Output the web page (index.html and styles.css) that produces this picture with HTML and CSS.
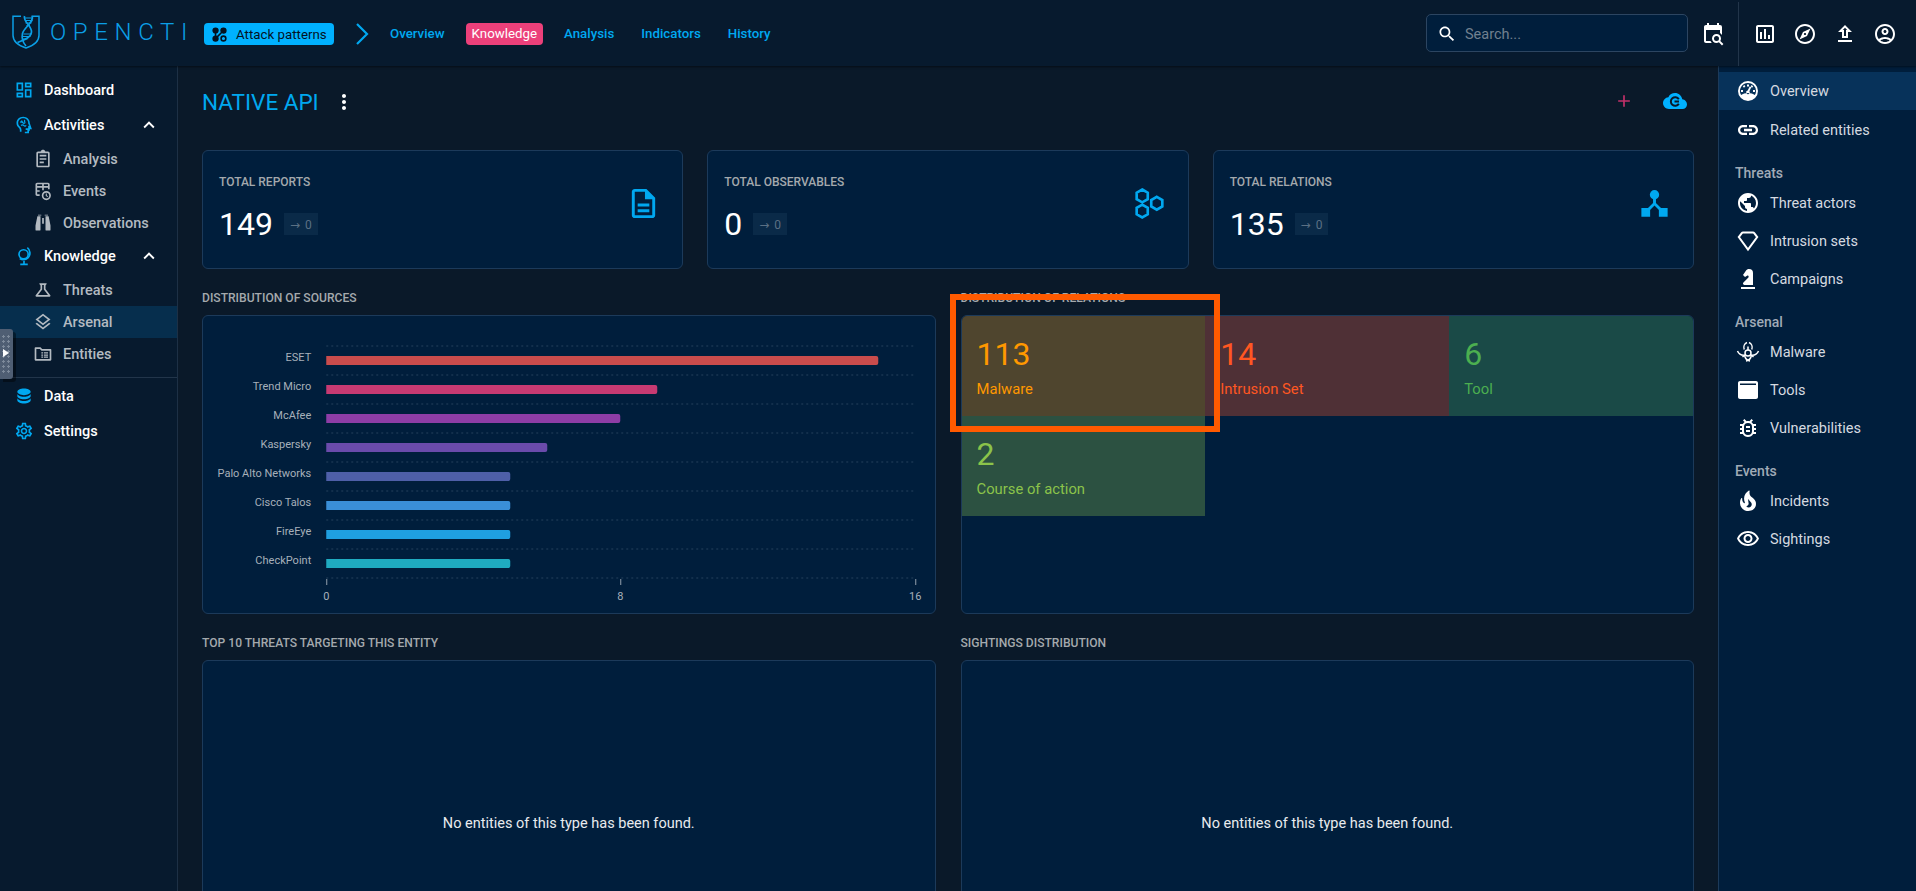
FILE: index.html
```html
<!DOCTYPE html>
<html lang="en">
<head>
<meta charset="UTF-8">
<title>Native API - Knowledge | OpenCTI</title>
<link rel="stylesheet" href="styles.css">
</head>
<body>

<header class="topbar">
  <div class="logo">
    <svg class="logo-mark" viewBox="0 0 28 34" fill="none" stroke="#0b9fe6">
      <path d="M9 1.200H1v19c0 7 6 10.500 13 12.800 7-2.300 13-5.800 13-12.800v-19h-6" stroke-width="1.500"/>
      <path d="M20 0.500C23 7 12 12 10.500 18.500C9.500 23 10.500 27 14 31" stroke-width="1.700"/>
      <path d="M12.500 1C11 7 20 11 19.500 17C19 23 11 25 5.500 27.500" stroke-width="1.700"/>
      <path d="M13 3h7M13 5.500h7.500M13.500 8h6M14.500 10.500h3.500M11.500 19h8M11 21.500h7.500M10.500 24h5" stroke-width="1.100"/>
    </svg>
    <span class="logo-text">OPENCTI</span>
  </div>
  <span class="type-chip">
    <svg viewBox="0 0 24 24"><path d="M7,3A4,4 0 0,1 11,7C11,8.860 9.730,10.430 8,10.870V13.130C8.370,13.220 8.720,13.370 9.040,13.560L13.560,9.040C13.200,8.440 13,7.750 13,7A4,4 0 0,1 17,3A4,4 0 0,1 21,7A4,4 0 0,1 17,11C16.260,11 15.570,10.800 15,10.450L10.450,15C10.800,15.570 11,16.260 11,17A4,4 0 0,1 7,21A4,4 0 0,1 3,17C3,15.140 4.270,13.570 6,13.130V10.870C4.270,10.430 3,8.860 3,7A4,4 0 0,1 7,3M17,13A4,4 0 0,1 21,17A4,4 0 0,1 17,21A4,4 0 0,1 13,17A4,4 0 0,1 17,13M17,15A2,2 0 0,0 15,17A2,2 0 0,0 17,19A2,2 0 0,0 19,17A2,2 0 0,0 17,15Z"/></svg>
    Attack patterns
  </span>
  <svg class="crumb" viewBox="0 0 14 24" fill="none"><path d="M2 2l10 10L2 22" stroke="#00a8f0" stroke-width="2.200"/></svg>
  <nav class="tabs">
    <a class="tab">Overview</a>
    <a class="tab tab-active">Knowledge</a>
    <a class="tab">Analysis</a>
    <a class="tab">Indicators</a>
    <a class="tab">History</a>
  </nav>
  <div class="topbar-right">
    <div class="search">
      <svg viewBox="0 0 24 24"><path d="M15.500 14h-.790l-.280-.270C15.410 12.590 16 11.110 16 9.500 16 5.910 13.090 3 9.500 3S3 5.910 3 9.500 5.910 16 9.500 16c1.610 0 3.090-.590 4.230-1.570l.270.280v.790l5 4.990L20.490 19l-4.990-5zm-6 0C7.010 14 5 11.990 5 9.500S7.010 5 9.500 5 14 7.010 14 9.500 11.990 14 9.500 14z"/></svg>
      <span>Search...</span>
    </div>
    <svg class="top-icon cal-icon" viewBox="0 0 24 24"><path d="M15.500,12C18,12 20,14 20,16.500C20,17.380 19.750,18.210 19.310,18.900L22.390,22L21,23.390L17.880,20.320C17.190,20.750 16.370,21 15.500,21C13,21 11,19 11,16.500C11,14 13,12 15.500,12M15.500,14A2.500,2.500 0 0,0 13,16.500A2.500,2.500 0 0,0 15.500,19A2.500,2.500 0 0,0 18,16.500A2.500,2.500 0 0,0 15.500,14M19,8H5V19H9.500C9.810,19.750 10.260,20.420 10.810,21H5C3.890,21 3,20.100 3,19V5C3,3.890 3.890,3 5,3H6V1H8V3H16V1H18V3H19A2,2 0 0,1 21,5V13.030C20.500,12.220 19.800,11.540 19,11V8Z"/></svg>
    <div class="top-actions">
      <svg class="top-icon" viewBox="0 0 24 24"><path d="M9 17H7v-7h2v7zm4 0h-2V7h2v10zm4 0h-2v-4h2v4zm2 2H5V5h14v14zm0-16H5c-1.100 0-2 .900-2 2v14c0 1.100.900 2 2 2h14c1.100 0 2-.900 2-2V5c0-1.100-.900-2-2-2z"/></svg>
      <svg class="top-icon" viewBox="0 0 24 24"><path d="M12 2C6.480 2 2 6.480 2 12s4.480 10 10 10 10-4.480 10-10S17.520 2 12 2zm0 18c-4.410 0-8-3.590-8-8s3.590-8 8-8 8 3.590 8 8-3.590 8-8 8zm-5.500-2.500l7.510-3.490L17.500 6.500 9.990 9.990 6.500 17.500zm5.500-6.600c.610 0 1.100.490 1.100 1.100s-.490 1.100-1.100 1.100-1.100-.490-1.100-1.100.490-1.100 1.100-1.100z"/></svg>
      <svg class="top-icon" viewBox="0 0 24 24"><path d="M9 16h6v-6h4l-7-7-7 7h4v6zm3-10.170L14.170 8H13v6h-2V8H9.830L12 5.830zM5 18h14v2H5z"/></svg>
      <svg class="top-icon" viewBox="0 0 24 24"><path d="M12 2C6.480 2 2 6.480 2 12s4.480 10 10 10 10-4.480 10-10S17.520 2 12 2zM7.350 18.500C8.660 17.560 10.260 17 12 17s3.340.560 4.650 1.500c-1.310.940-2.910 1.500-4.650 1.500s-3.340-.560-4.650-1.500zm10.790-1.380C16.450 15.800 14.320 15 12 15s-4.450.800-6.140 2.120C4.700 15.730 4 13.950 4 12c0-4.420 3.580-8 8-8s8 3.580 8 8c0 1.950-.700 3.730-1.860 5.120zM12 6c-1.930 0-3.500 1.570-3.500 3.500S10.070 13 12 13s3.500-1.570 3.500-3.500S13.930 6 12 6zm0 5c-.830 0-1.500-.670-1.500-1.500S11.170 8 12 8s1.500.670 1.500 1.500S12.830 11 12 11z"/></svg>
    </div>
  </div>
</header>

<div class="layout">
  <aside class="sidebar">
    <div class="nav-group">
      <a class="nav-item">
        <svg viewBox="0 0 24 24"><path d="M19 5v2h-4V5h4M9 5v6H5V5h4m10 8v6h-4v-6h4M9 17v2H5v-2h4M21 3h-8v6h8V3zM11 3H3v10h8V3zm10 8h-8v10h8V11zm-10 4H3v6h8v-6z"/></svg>
        Dashboard
      </a>
      <a class="nav-item">
        <svg viewBox="0 0 24 24"><path d="M11 2C6.500 2 3 5.300 3 9.500c0 2.300 1 4.400 2.700 5.800.800.700 1.300 1.700 1.300 2.700V20h2v-2c0-1.600-.800-3.100-2-4.200-1.300-1.100-2-2.700-2-4.300C5 6.400 7.700 4 11 4s6 2.400 6 5.500v1.100l1.500 2.400H17v3h-3v2h2v2h-3v2h5v-2.500c.800-.300 1-1 1-1.500v-1h2.500L19 10V9.500C19 5.300 15.500 2 11 2z"/><path fill="none" stroke="#00a8f0" stroke-width="1.500" d="M7.500 9c1-1.500 2.500-1 3 0s2 1.500 3 0M9 6.500c1 .800 1 2 .300 3M13 6c-.800 1-.500 2.200.300 3M8.500 12.500c1-.800 2.500-1 3.500.300s2 .500 2.500-.500"/></svg>
        Activities
        <svg class="nav-caret" viewBox="0 0 24 24"><path d="M12 8l-6 6 1.410 1.410L12 10.830l4.590 4.580L18 14z"/></svg>
      </a>
      <a class="nav-sub">
        <svg viewBox="0 0 24 24"><path d="M18 3h-3.180C14.400 1.840 13.300 1 12 1c-1.300 0-2.400.840-2.820 2H6c-1.100 0-2 .900-2 2v15c0 1.100.900 2 2 2h12c1.100 0 2-.900 2-2V5c0-1.100-.900-2-2-2zm0 17H6V5h12v15zM8 15h5v2H8zm0-4h8v2H8zm0-4h8v2H8z"/></svg>
        Analysis
      </a>
      <a class="nav-sub">
        <svg viewBox="0 0 24 24"><path d="M5 2h13c1.100 0 2 .900 2 2v6h-2V8h-5v3h-2V8H5v3h3v2H5v3h3v2H5c-1.100 0-2-.900-2-2V4c0-1.100.900-2 2-2zm0 2v2h6V4H5zm8 0v2h5V4h-5zm3 8a5.500 5.500 0 1 0 0 11 5.500 5.500 0 0 0 0-11zm0 2a3.500 3.500 0 1 1 0 7 3.500 3.500 0 0 1 0-7zm-.700 1v3l2.300 1.300.600-1-1.600-.900V15z"/></svg>
        Events
      </a>
      <a class="nav-sub">
        <svg viewBox="0 0 24 24"><path d="M11,6H13V13H11V6M9,20A1,1 0 0,1 8,21H4A1,1 0 0,1 3,20V15L5.250,4H9V20M15,20V4H18.750L21,15V20A1,1 0 0,1 20,21H16A1,1 0 0,1 15,20M14,2H18V3H14V2M10,2V3H6V2H10Z"/></svg>
        Observations
      </a>
      <a class="nav-item">
        <svg viewBox="0 0 24 24" stroke="#00a8f0" stroke-width="2"><circle fill="none" cx="11.500" cy="10" r="5.500"/><path fill="none" d="M16 2c3.500 2.800 4.300 8.500 1 12-2.600 2.800-7 3.300-10 1M12 18v3M7.500 22h9"/></svg>
        Knowledge
        <svg class="nav-caret" viewBox="0 0 24 24"><path d="M12 8l-6 6 1.410 1.410L12 10.830l4.590 4.580L18 14z"/></svg>
      </a>
      <a class="nav-sub">
        <svg viewBox="0 0 24 24"><path d="M13,11.330L18,18H6l5-6.670V6h2M15.960,4H8.040C7.620,4,7.390,4.480,7.650,4.810L9,6.500v4.170L3.200,18.400C2.710,19.060,3.180,20,4,20h16c0.820,0,1.290-0.940,0.800-1.600L15,10.670V6.500l1.350-1.690C16.610,4.480,16.380,4,15.960,4L15.960,4z"/></svg>
        Threats
      </a>
      <a class="nav-sub nav-sub-active">
        <svg viewBox="0 0 24 24"><path d="M11.990 18.540l-7.370-5.730L3 14.070l9 7 9-7-1.630-1.270zM12 16l7.360-5.730L21 9l-9-7-9 7 1.630 1.270L12 16zm0-11.470L17.740 9 12 13.470 6.260 9 12 4.530z"/></svg>
        Arsenal
      </a>
      <a class="nav-sub">
        <svg viewBox="0 0 24 24"><path d="M3 4h6l2 2h10c.600 0 1 .400 1 1v12c0 .600-.400 1-1 1H3c-.600 0-1-.400-1-1V5c0-.600.400-1 1-1zm1 2v12h16V8H10.200l-2-2H4zm9 4h5v1.500h-5zm0 2.500h5V14h-5zm0 2.500h5v1.500h-5zm-3-5h2v1.500h-2zm0 2.500h2V14h-2zm0 2.500h2v1.500h-2z"/></svg>
        Entities
      </a>
    </div>
    <div class="nav-group nav-group-bottom">
      <a class="nav-item">
        <svg viewBox="0 0 24 24"><path d="M12,3C7.580,3 4,4.790 4,7C4,9.210 7.580,11 12,11C16.420,11 20,9.210 20,7C20,4.790 16.420,3 12,3M4,9V12C4,14.210 7.580,16 12,16C16.420,16 20,14.210 20,12V9C20,11.210 16.420,13 12,13C7.580,13 4,11.210 4,9M4,14V17C4,19.210 7.580,21 12,21C16.420,21 20,19.210 20,17V14C20,16.210 16.420,18 12,18C7.580,18 4,16.210 4,14Z"/></svg>
        Data
      </a>
      <a class="nav-item">
        <svg viewBox="0 0 24 24"><path d="M19.430 12.980c.040-.320.070-.640.070-.980 0-.340-.030-.660-.070-.980l2.110-1.650c.190-.150.240-.420.120-.640l-2-3.460c-.090-.160-.260-.250-.440-.250-.060 0-.120.010-.170.030l-2.490 1c-.520-.400-1.080-.730-1.690-.980l-.380-2.650C14.460 2.180 14.250 2 14 2h-4c-.250 0-.460.180-.490.420l-.380 2.650c-.610.250-1.170.590-1.690.980l-2.490-1c-.060-.020-.120-.030-.180-.030-.170 0-.340.090-.430.250l-2 3.460c-.130.220-.070.490.120.640l2.110 1.650c-.040.320-.070.650-.070.980 0 .330.030.660.070.980l-2.110 1.650c-.190.150-.240.420-.120.640l2 3.460c.090.160.260.250.440.250.060 0 .120-.010.170-.030l2.490-1c.520.400 1.080.730 1.690.980l.380 2.650c.030.240.240.420.490.420h4c.250 0 .460-.180.490-.420l.380-2.650c.610-.250 1.170-.590 1.690-.980l2.490 1c.060.020.120.030.180.030.170 0 .340-.090.430-.250l2-3.460c.120-.220.070-.490-.120-.640l-2.110-1.650zm-1.980-1.710c.040.310.050.520.050.730 0 .210-.020.430-.050.730l-.140 1.130.890.700 1.080.840-.700 1.210-1.270-.510-1.040-.420-.900.680c-.430.320-.840.560-1.250.730l-1.060.430-.160 1.130-.200 1.350h-1.400l-.190-1.350-.160-1.130-1.060-.43c-.430-.180-.830-.410-1.230-.710l-.910-.700-1.060.430-1.270.510-.700-1.210 1.080-.840.890-.700-.140-1.130c-.030-.310-.050-.540-.050-.740s.020-.430.050-.730l.140-1.130-.890-.700-1.080-.840.700-1.210 1.270.510 1.040.42.900-.680c.430-.320.840-.560 1.250-.730l1.060-.43.160-1.130.200-1.350h1.390l.190 1.350.160 1.130 1.060.43c.430.180.830.410 1.230.710l.910.700 1.060-.43 1.270-.510.700 1.210-1.070.850-.890.700.140 1.130zM12 8c-2.210 0-4 1.790-4 4s1.790 4 4 4 4-1.790 4-4-1.790-4-4-4zm0 6c-1.100 0-2-.900-2-2s.900-2 2-2 2 .900 2 2-.900 2-2 2z"/></svg>
        Settings
      </a>
    </div>
    <div class="drag-handle"></div>
  </aside>

  <main class="content">
    <div class="title-row">
      <h1 class="entity-name">NATIVE API</h1>
      <svg class="kebab" viewBox="0 0 24 24"><path d="M12 8c1.100 0 2-.900 2-2s-.900-2-2-2-2 .900-2 2 .900 2 2 2zm0 2c-1.100 0-2 .900-2 2s.900 2 2 2 2-.900 2-2-.900-2-2-2zm0 6c-1.100 0-2 .900-2 2s.900 2 2 2 2-.900 2-2-.900-2-2-2z"/></svg>
      <div class="title-actions">
        <svg class="plus" viewBox="0 0 24 24"><path d="M19 13h-6v6h-2v-6H5v-2h6V5h2v6h6v2z"/></svg>
        <svg class="cloud" viewBox="0 0 24 16"><path d="M19.300 6.200C18.600 2.700 15.600 0 12 0 9.100 0 6.600 1.300 5.400 4.200 2.300 4.500 0 7 0 10.100 0 13.300 2.700 16 6 16h13.500c2.500 0 4.500-2 4.500-4.500 0-2.700-2.100-5-4.700-5.300z"/><path d="M15.800 6.200A4.300 4.300 0 1 0 15.800 10.800M11.500 8.500h4.500" fill="none" stroke="#0a1929" stroke-width="2"/></svg>
      </div>
    </div>

    <div class="stat-row">
      <div class="stat-card">
        <div class="stat-text">
          <div class="stat-label">TOTAL REPORTS</div>
          <div class="stat-line"><span class="stat-value">149</span><span class="delta"><i>&#8594;</i> 0</span></div>
        </div>
        <svg class="stat-icon" viewBox="0 0 24 24"><path d="M8 16h8v2H8zm0-4h8v2H8zm6-10H6c-1.100 0-2 .900-2 2v16c0 1.100.890 2 1.990 2H18c1.100 0 2-.900 2-2V8l-6-6zm4 18H6V4h7v5h5v11z"/></svg>
      </div>
      <div class="stat-card">
        <div class="stat-text">
          <div class="stat-label">TOTAL OBSERVABLES</div>
          <div class="stat-line"><span class="stat-value">0</span><span class="delta"><i>&#8594;</i> 0</span></div>
        </div>
        <svg class="stat-icon" viewBox="0 0 24 24"><path fill="none" stroke="#00a8f0" stroke-width="1.800" d="M7 2.400l3.800 2.200v4.400L7 11.200 3.200 9V4.600zM17 7.400l3.800 2.200v4.400L17 16.200 13.200 14V9.600zM7 12.800l3.800 2.200v4.400L7 21.600l-3.800-2.200V15z"/></svg>
      </div>
      <div class="stat-card">
        <div class="stat-text">
          <div class="stat-label">TOTAL RELATIONS</div>
          <div class="stat-line"><span class="stat-value">135</span><span class="delta"><i>&#8594;</i> 0</span></div>
        </div>
        <svg class="stat-icon" viewBox="0 0 24 24"><circle cx="12" cy="6" r="3.200"/><path d="M11 8h2v3.600l4.500 4.500-1.400 1.400-4.100-4.100-4.100 4.100-1.400-1.400 4.500-4.500z"/><path d="M3 15h6v6H3zM15 15h6v6h-6z"/></svg>
      </div>
    </div>

    <div class="panel-grid">
      <section>
        <h2 class="panel-title">Distribution of sources</h2>
        <div class="panel panel-chart">
          <svg class="bar-chart" viewBox="0 1 731 297">
            <g class="grid-lines">
              <path d="M123 31H713M123 60H713M123 89H713M123 118H713M123 147H713M123 176H713M123 205H713M123 234H713M123 263H713"/>
            </g>
            <g class="bar-labels" text-anchor="end">
              <text x="108" y="46">ESET</text>
              <text x="108" y="75">Trend Micro</text>
              <text x="108" y="104">McAfee</text>
              <text x="108" y="133">Kaspersky</text>
              <text x="108" y="162">Palo Alto Networks</text>
              <text x="108" y="191">Cisco Talos</text>
              <text x="108" y="220">FireEye</text>
              <text x="108" y="249">CheckPoint</text>
            </g>
            <path fill="#c94c4c" d="M123 41H673a2 2 0 0 1 2 2v5a2 2 0 0 1-2 2H123z"/>
            <path fill="#c73a72" d="M123 70H452a2 2 0 0 1 2 2v5a2 2 0 0 1-2 2H123z"/>
            <path fill="#8e3da6" d="M123 99H415a2 2 0 0 1 2 2v5a2 2 0 0 1-2 2H123z"/>
            <path fill="#6a4bab" d="M123 128H342a2 2 0 0 1 2 2v5a2 2 0 0 1-2 2H123z"/>
            <path fill="#4e5fa8" d="M123 157H305a2 2 0 0 1 2 2v5a2 2 0 0 1-2 2H123z"/>
            <path fill="#3a8fd8" d="M123 186H305a2 2 0 0 1 2 2v5a2 2 0 0 1-2 2H123z"/>
            <path fill="#1f9fe0" d="M123 215H305a2 2 0 0 1 2 2v5a2 2 0 0 1-2 2H123z"/>
            <path fill="#1fabc0" d="M123 244H305a2 2 0 0 1 2 2v5a2 2 0 0 1-2 2H123z"/>
            <path class="axis-ticks" d="M123.500 264v6M417.500 264v6M712.500 264v6"/>
            <g class="bar-labels" text-anchor="middle">
              <text x="123" y="285">0</text>
              <text x="417" y="285">8</text>
              <text x="712" y="285">16</text>
            </g>
          </svg>
        </div>
      </section>
      <section class="relations">
        <h2 class="panel-title">Distribution of relations</h2>
        <div class="panel panel-chart treemap">
          <div class="cell cell-malware"><strong>113</strong><span>Malware</span></div>
          <div class="cell cell-intrusion"><strong>14</strong><span>Intrusion Set</span></div>
          <div class="cell cell-tool"><strong>6</strong><span>Tool</span></div>
          <div class="cell cell-course"><strong>2</strong><span>Course of action</span></div>
        </div>
        <div class="highlight-box"></div>
      </section>
      <section>
        <h2 class="panel-title">Top 10 threats targeting this entity</h2>
        <div class="panel panel-empty">No entities of this type has been found.</div>
      </section>
      <section>
        <h2 class="panel-title">Sightings distribution</h2>
        <div class="panel panel-empty">No entities of this type has been found.</div>
      </section>
    </div>
  </main>

  <aside class="rightnav">
    <a class="r-item r-item-active">
      <svg viewBox="0 0 24 24"><path d="M12 2a10 10 0 1 0 0 20 10 10 0 0 0 0-20zm0 2a8 8 0 0 1 8 8c0 1.500-.400 2.900-1.100 4.100-1.700-1.300-4.200-2.100-6.900-2.100s-5.200.800-6.900 2.100A8 8 0 0 1 12 4zM11 5.500h2v2h-2zM6.800 7.500l1.400-1.400 1.200 1.200L8 8.700zM15.800 6.100l1.400 1.400-1.200 1.200-1.400-1.400zM5 11h2v2H5zM17 11h2v2h-2zM13.700 7.500l1.600.800-1.900 3.900a1.800 1.800 0 1 1-1.700-.700z"/></svg>
      Overview
    </a>
    <a class="r-item">
      <svg viewBox="0 0 24 24"><path d="M17 7h-4v2.200h4c1.550 0 2.800 1.250 2.800 2.800s-1.250 2.800-2.800 2.800h-4V17h4c2.760 0 5-2.240 5-5s-2.240-5-5-5zm-6 7.800H7c-1.550 0-2.800-1.250-2.800-2.800S5.450 9.200 7 9.200h4V7H7c-2.760 0-5 2.240-5 5s2.240 5 5 5h4v-2.200zM8 10.800h8v2.400H8z"/></svg>
      Related entities
    </a>
    <div class="r-heading">Threats</div>
    <a class="r-item">
      <svg viewBox="0 0 24 24"><path d="M12 2C6.480 2 2 6.480 2 12s4.480 10 10 10 10-4.480 10-10S17.520 2 12 2zm-1 17.930c-3.950-.490-7-3.850-7-7.930 0-.620.080-1.210.210-1.790L9 15v1c0 1.100.900 2 2 2v1.930zm6.900-2.540c-.260-.810-1-1.390-1.900-1.390h-1v-3c0-.550-.450-1-1-1H8v-2h2c.550 0 1-.450 1-1V7h2c1.100 0 2-.900 2-2v-.410c2.930 1.190 5 4.060 5 7.410 0 2.080-.800 3.970-2.100 5.390z"/></svg>
      Threat actors
    </a>
    <a class="r-item">
      <svg viewBox="0 0 24 24"><path fill="none" stroke="#fff" stroke-width="2" d="M7 3.500h10a1.500 1.500 0 0 1 1.200.600l3 4L12 20.500 2.800 8.100l3-4A1.500 1.500 0 0 1 7 3.500z"/></svg>
      Intrusion sets
    </a>
    <a class="r-item">
      <svg viewBox="0 0 24 24"><path d="M19,22H5V20H19V22M13,2V2C11.750,2 10.580,2.620 9.890,3.660L7,8L9,10L11.060,8.630C11.500,8.320 12.140,8.440 12.450,8.900C12.470,8.930 12.500,8.960 12.500,9V9C12.800,9.590 12.690,10.300 12.220,10.770L7.420,15.570C6.870,16.130 6.870,17.030 7.430,17.580C7.690,17.840 8.050,18 8.420,18H17V6A4,4 0 0,0 13,2Z"/></svg>
      Campaigns
    </a>
    <div class="r-heading">Arsenal</div>
    <a class="r-item">
      <svg viewBox="0 0 24 24"><g fill="none" stroke="#fff" stroke-width="1.500"><circle cx="12" cy="13" r="3"/><path d="M8.200 9.500C7.200 6.500 8.500 3.500 11 2.500M15.800 9.500C16.800 6.500 15.500 3.500 13 2.500M8.600 15.200C5.500 15.500 2.800 14 1.500 11M8.600 15.200C9 18.300 11 20.500 14 21M15.400 15.200C18.500 15.500 21.200 14 22.500 11M15.400 15.200C15 18.300 13 20.500 10 21M12 6.500V10M6.500 17l3-2.500M17.500 17l-3-2.500"/></g></svg>
      Malware
    </a>
    <a class="r-item">
      <svg viewBox="0 0 24 24"><path d="M4 3h16c1.100 0 2 .900 2 2v14c0 1.100-.900 2-2 2H4c-1.100 0-2-.900-2-2V5c0-1.100.900-2 2-2zm0 2.500V7h16V5.500H4z"/></svg>
      Tools
    </a>
    <a class="r-item">
      <svg viewBox="0 0 24 24"><path d="M14,12H10V10H14M14,16H10V14H14M20,8H17.190C16.740,7.220 16.120,6.550 15.370,6.040L17,4.410L15.590,3L13.420,5.170C12.960,5.060 12.500,5 12,5C11.500,5 11.040,5.060 10.590,5.170L8.410,3L7,4.410L8.620,6.040C7.880,6.550 7.260,7.220 6.810,8H4V10H6.090C6.040,10.330 6,10.660 6,11V12H4V14H6V15C6,15.340 6.040,15.670 6.090,16H4V18H6.810C7.850,19.790 9.780,21 12,21C14.220,21 16.150,19.790 17.190,18H20V16H17.910C17.960,15.670 18,15.340 18,15V14H20V12H18V11C18,10.660 17.960,10.330 17.910,10H20V8M16,15A4,4 0 0,1 12,19A4,4 0 0,1 8,15V11A4,4 0 0,1 12,7A4,4 0 0,1 16,11V15Z"/></svg>
      Vulnerabilities
    </a>
    <div class="r-heading">Events</div>
    <a class="r-item">
      <svg viewBox="0 0 24 24"><path d="M19.480 12.350c-1.570-4.080-7.160-4.300-5.810-10.230.100-.440-.370-.780-.750-.550C9.290 3.710 6.680 8 8.870 13.620c.180.460-.360.890-.750.590-1.810-1.370-2-3.340-1.840-4.750.060-.520-.620-.770-.910-.340C4.690 10.160 4 11.840 4 14.370c.380 5.600 5.110 7.320 6.810 7.540 2.430.310 5.060-.140 6.950-1.870 2.080-1.930 2.840-5.010 1.720-7.690zm-9.280 5.030c1.440-.350 2.180-1.390 2.380-2.310.330-1.430-.960-2.830-.090-5.090.330 1.870 3.270 3.040 3.270 5.080.080 2.530-2.660 4.700-5.560 2.320z"/></svg>
      Incidents
    </a>
    <a class="r-item">
      <svg viewBox="0 0 24 24"><path d="M12 6c3.790 0 7.170 2.130 8.820 5.500C19.170 14.870 15.790 17 12 17s-7.170-2.130-8.820-5.500C4.830 8.130 8.210 6 12 6m0-2C7 4 2.730 7.110 1 11.500 2.730 15.890 7 19 12 19s9.270-3.110 11-7.500C21.270 7.110 17 4 12 4zm0 5c1.380 0 2.500 1.120 2.500 2.500S13.380 14 12 14s-2.500-1.120-2.500-2.500S10.620 9 12 9m0-2c-2.480 0-4.500 2.020-4.500 4.500S9.520 16 12 16s4.500-2.020 4.500-4.500S14.480 7 12 7z"/></svg>
      Sightings
    </a>
  </aside>
</div>

</body>
</html>
```

FILE: styles.css
```css
* {
  box-sizing: border-box;
}

html, body {
  height: 100%;
}

body {
  margin: 0;
  display: flex;
  flex-direction: column;
  height: 891px;
  overflow: hidden;
  background: #0a1929;
  color: #fff;
  font-family: "Roboto", "Noto Sans", sans-serif;
  font-size: 14.500px;
}

/* top bar */
.topbar {
  flex: 0 0 66px;
  display: flex;
  align-items: center;
  padding-top: 2px;
  background: #071a2e;
  box-shadow: 0 1px 2px rgba(0, 0, 0, 0.5);
  position: relative;
  z-index: 2;
}

.logo {
  display: flex;
  align-items: center;
  width: 204px;
  padding-left: 12px;
}

.logo-mark {
  width: 28px;
  height: 34px;
  margin-top: -4px;
}

.logo-text {
  margin-left: 10px;
  font-size: 24px;
  font-weight: 300;
  letter-spacing: 6.600px;
  color: #0b9fe6;
  margin-top: -5px;
}

.type-chip {
  display: flex;
  align-items: center;
  gap: 7px;
  width: 130px;
  height: 22px;
  padding-left: 6px;
  border-radius: 4px;
  background: #00b1ff;
  color: #04121f;
  font-size: 13.300px;
  font-weight: 400;
}

.type-chip svg {
  width: 19px;
  height: 19px;
  fill: #04121f;
}

.crumb {
  width: 14px;
  height: 24px;
  margin-left: 21px;
}

.tabs {
  display: flex;
  align-items: center;
  gap: 15px;
  margin-left: 15px;
}

.tab {
  height: 22px;
  line-height: 22px;
  padding: 0 6px;
  border-radius: 4px;
  color: #00a8f0;
  font-size: 13.300px;
  font-weight: 500;
}

.tab-active {
  background: #ec407a;
  color: #fff;
  font-weight: 400;
}

.topbar-right {
  margin-left: auto;
  display: flex;
  align-items: center;
  height: 100%;
}

.search {
  display: flex;
  align-items: center;
  width: 262px;
  height: 38px;
  margin-top: -2px;
  padding: 2px 0 0 10px;
  border: 1px solid #2c4561;
  border-radius: 5px;
  background: #001e3c;
  color: #71808f;
}

.search svg {
  width: 20px;
  height: 20px;
  fill: #fff;
  margin-right: 8px;
}

.top-icon {
  width: 24px;
  height: 24px;
  fill: #fff;
}

.cal-icon {
  margin-left: 13px;
}

.top-actions {
  display: flex;
  align-items: center;
  gap: 16px;
  height: 64px;
  margin-left: 13px;
  padding: 0 19px 0 14px;
  border-left: 1px solid #22354a;
}

/* left navigation */
.layout {
  flex: 1;
  display: flex;
  min-height: 0;
}

.sidebar {
  flex: 0 0 178px;
  padding-top: 7px;
  background: #071a2e;
  border-right: 1px solid #1d3045;
  position: relative;
}

.nav-group-bottom {
  margin-top: 7px;
  border-top: 1px solid #22354a;
  padding-top: 1px;
}

.nav-item,
.nav-sub {
  display: flex;
  align-items: center;
}

.nav-item {
  height: 35px;
  padding: 0 0 1px 14px;
  font-weight: 500;
}

.nav-item > svg:first-child {
  width: 20px;
  height: 20px;
  margin-right: 10px;
  fill: #00a8f0;
}

.nav-caret {
  width: 22px;
  height: 22px;
  fill: #fff;
  margin-left: auto;
  margin-right: 17px;
}

.nav-sub {
  height: 32px;
  padding-left: 33px;
  color: #b3bac1;
  font-weight: 500;
}

.nav-sub svg {
  width: 20px;
  height: 20px;
  margin-right: 10px;
  fill: #b3bac1;
}

.nav-sub-active {
  background: #062e4d;
}

.drag-handle {
  position: absolute;
  left: 0;
  top: 263px;
  width: 13px;
  height: 50px;
  border-radius: 0 3px 3px 0;
  background: #4f5e73;
  box-shadow: 3px 3px 0 rgba(0, 0, 0, 0.4);
}

.drag-handle::after {
  content: "";
  position: absolute;
  left: 3px;
  top: 20px;
  border-left: 6px solid #fff;
  border-top: 4px solid transparent;
  border-bottom: 4px solid transparent;
}

.drag-handle::before {
  content: "";
  position: absolute;
  left: 1px;
  right: 1px;
  top: 5px;
  bottom: 5px;
  background-image: radial-gradient(circle, #7d8a9b 1px, transparent 1.200px);
  background-size: 5px 5px;
}

/* main content */
.content {
  flex: 1;
  min-width: 0;
  padding: 16px 24px 0 24px;
}

.title-row {
  display: flex;
  align-items: center;
  height: 38px;
  margin-bottom: 30px;
}

.entity-name {
  margin: 2px 0 0;
  font-size: 22.500px;
  font-weight: 400;
  color: #00a8f0;
}

.kebab {
  width: 24px;
  height: 24px;
  fill: #fff;
  margin: 2px 0 0 13px;
}

.title-actions {
  margin: -1px 7px 0 auto;
  display: flex;
  align-items: center;
  gap: 29px;
}

.plus {
  width: 20px;
  height: 20px;
  fill: #c2306a;
}

.cloud {
  width: 24px;
  height: 16px;
  fill: #00b1ff;
}

.stat-row {
  display: grid;
  grid-template-columns: repeat(3, 1fr);
  gap: 24px;
  margin-bottom: 19px;
}

.stat-card {
  display: flex;
  justify-content: space-between;
  align-items: center;
  height: 119px;
  padding: 0 21px 0 16px;
  border: 1px solid #1c3a5a;
  border-radius: 6px;
  background: #001e3c;
}

.stat-text {
  padding-bottom: 3px;
}

.stat-label {
  font-size: 12px;
  font-weight: 500;
  color: #a4a9ad;
}

.stat-line {
  display: flex;
  align-items: center;
  margin-top: 17px;
}

.stat-value {
  font-size: 32px;
  line-height: 36px;
  font-weight: 400;
}

.delta {
  margin-left: 11px;
  height: 22px;
  line-height: 24px;
  padding: 0 6px;
  background: #0a2a48;
  color: #5b7084;
  font-size: 12px;
}

.delta i {
  font-family: "DejaVu Sans", sans-serif;
  font-style: normal;
  margin-right: 2px;
}

.stat-icon {
  width: 35px;
  height: 35px;
  fill: #00a8f0;
  margin-top: -12px;
}

.panel-grid {
  display: grid;
  grid-template-columns: 1fr 1fr;
  column-gap: 25px;
  row-gap: 19px;
}

.relations {
  position: relative;
}

.panel-title {
  margin: 0 0 7px;
  height: 20px;
  line-height: 20px;
  font-size: 12.100px;
  font-weight: 500;
  text-transform: uppercase;
  color: #a4a9ad;
}

.panel {
  border: 1px solid #1c3a5a;
  border-radius: 6px;
  background: #001e3c;
}

.panel-chart {
  height: 299px;
}

.panel-empty {
  height: 326px;
  display: flex;
  align-items: center;
  justify-content: center;
  color: #e8ebee;
}

.bar-chart {
  display: block;
  width: 100%;
  height: 100%;
}

.grid-lines path {
  fill: none;
  stroke: #24405c;
  stroke-width: 1;
  stroke-dasharray: 2 3;
}

.axis-ticks {
  stroke: #93a0ad;
  stroke-width: 1;
}

.bar-labels text {
  font-size: 11px;
  fill: #a7b0ba;
}

.treemap {
  display: grid;
  grid-template-columns: repeat(3, 1fr);
  grid-auto-rows: 100px;
  overflow: hidden;
}

.cell {
  padding: 21px 15px 0;
  display: flex;
  flex-direction: column;
}

.cell strong {
  font-size: 32px;
  line-height: 34px;
  font-weight: 400;
}

.cell span {
  margin-top: 9px;
  font-size: 14.800px;
  line-height: 18px;
}

.cell-malware { background: #4f452e; color: #ff9800; }
.cell-intrusion { background: #4f3036; color: #ff5722; }
.cell-tool { background: #1a4a47; color: #4caf50; }
.cell-course { background: #2c5141; color: #8bc34a; }

.highlight-box {
  position: absolute;
  left: -11px;
  top: 6px;
  width: 270px;
  height: 138px;
  border: 6px solid #ff5a00;
}

/* right navigation */
.rightnav {
  flex: 0 0 198px;
  padding-top: 6px;
  background: #001e3c;
  border-left: 1px solid #1c3a5a;
  color: #d5dae0;
}

.r-item {
  display: flex;
  align-items: center;
  height: 38px;
  padding-left: 17px;
}

.r-item svg {
  width: 24px;
  height: 24px;
  margin-right: 10px;
  fill: #fff;
}

.r-item-active {
  background: #07325a;
  margin-bottom: 1px;
}

.r-heading {
  height: 35px;
  padding: 14px 0 0 16px;
  line-height: 20px;
  font-size: 14px;
  font-weight: 500;
  color: #a0abb7;
}
```
